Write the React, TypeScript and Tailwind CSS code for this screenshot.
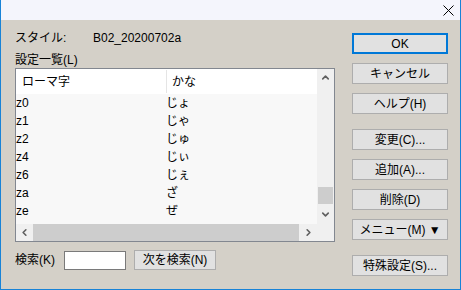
import { ChevronDown, ChevronLeft, ChevronRight, ChevronUp } from "lucide-react"

// ローマ字設定の一覧
const rows = [
  { romaji: "z0", kana: "じょ" },
  { romaji: "z1", kana: "じゃ" },
  { romaji: "z2", kana: "じゅ" },
  { romaji: "z4", kana: "じぃ" },
  { romaji: "z6", kana: "じぇ" },
  { romaji: "za", kana: "ざ" },
  { romaji: "ze", kana: "ぜ" },
]

const font = { fontFamily: '"Liberation Sans", "Noto Sans CJK JP", sans-serif' }

function Button({ label, primary = false, className = "" }: { label: string; primary?: boolean; className?: string }) {
  return (
    <div
      className={`flex h-[21px] w-[96px] items-center justify-center bg-[#e1e1e1] text-[12px] text-black ${
        primary ? "border-2 border-[#0078d7]" : "border border-[#adadad]"
      } ${className}`}
    >
      {label}
    </div>
  )
}

export default function App() {
  return (
    <div
      className="flex h-[290px] w-[461px] flex-col border-x border-b border-[#1883d7] bg-[#d4d0c8] text-[12px] leading-[16px] text-black"
      style={font}
    >
      {/* タイトルバー */}
      <div className="flex h-[20px] shrink-0 items-center justify-end bg-[#f4f5fc] pr-[5px]">
        <svg width="11" height="11" viewBox="0 0 11 11" className="mr-[1px]">
          <path d="M0.5 0.5 L10.5 10.5 M10.5 0.5 L0.5 10.5" stroke="#000" strokeWidth="1" />
        </svg>
      </div>

      <div className="flex flex-1">
        {/* 左側 */}
        <div className="ml-[14px] flex w-[320px] flex-col pt-[10px]">
          <div className="flex h-[16px] items-center">
            <span className="w-[78px]">スタイル:</span>
            <span>B02_20200702a</span>
          </div>
          <div className="mt-[6px] flex h-[16px] items-center">設定一覧(L)</div>

          <div className="flex h-[174px] w-[320px] border border-[#828790] bg-white">
            <div className="flex w-[301px] flex-col">
              <div className="flex h-[25px] items-center bg-white">
                <span className="w-[150px] pl-[6px]">ローマ字</span>
                <span className="h-[23px] w-px bg-[#e5e5e5]" />
                <span className="pl-[5px]">かな</span>
              </div>
              <div className="flex flex-1 flex-col bg-[#f8f8f8]">
                {rows.map((row) => (
                  <div key={row.romaji} className="flex h-[18px] items-center">
                    <span className="w-[150px]">{row.romaji}</span>
                    <span>{row.kana}</span>
                  </div>
                ))}
              </div>
              <div className="flex h-[17px] items-center bg-[#f0f0f0]">
                <div className="flex w-[17px] items-center justify-center">
                  <ChevronLeft size={11} strokeWidth={3.5} color="#606060" />
                </div>
                <div className="h-[17px] flex-1 bg-[#cdcdcd]" />
                <div className="flex w-[18px] items-center justify-center">
                  <ChevronRight size={11} strokeWidth={3.5} color="#606060" />
                </div>
              </div>
            </div>
            <div className="flex w-[17px] flex-col bg-[#f0f0f0]">
              <div className="flex h-[17px] items-center justify-center">
                <ChevronUp size={11} strokeWidth={3.5} color="#606060" />
              </div>
              <div className="flex flex-1 flex-col justify-end pb-[2px]">
                <div className="mx-[1px] h-[17px] bg-[#cdcdcd]" />
              </div>
              <div className="flex h-[17px] items-center justify-center">
                <ChevronDown size={11} strokeWidth={3.5} color="#606060" />
              </div>
              <div className="h-[18px]" />
            </div>
          </div>

          <div className="mt-[8px] flex h-[20px] items-center">
            <span className="w-[49px]">検索(K)</span>
            <div className="h-[19px] w-[62px] border border-[#7a7a7a] bg-white" />
            <div className="ml-[8px] flex h-[20px] w-[82px] items-center justify-center border border-[#adadad] bg-[#e1e1e1]">
              次を検索(N)
            </div>
          </div>
        </div>

        {/* 右側のボタン */}
        <div className="ml-[17px] flex flex-col pt-[13px]">
          <Button label="OK" primary />
          <Button label="キャンセル" className="mt-[9px]" />
          <Button label="ヘルプ(H)" className="mt-[9px]" />
          <Button label="変更(C)..." className="mt-[15px]" />
          <Button label="追加(A)..." className="mt-[9px]" />
          <Button label="削除(D)" className="mt-[9px]" />
          <Button label="メニュー(M) ▼" className="mt-[9px]" />
          <Button label="特殊設定(S)..." className="mt-[15px]" />
        </div>
      </div>
    </div>
  )
}
